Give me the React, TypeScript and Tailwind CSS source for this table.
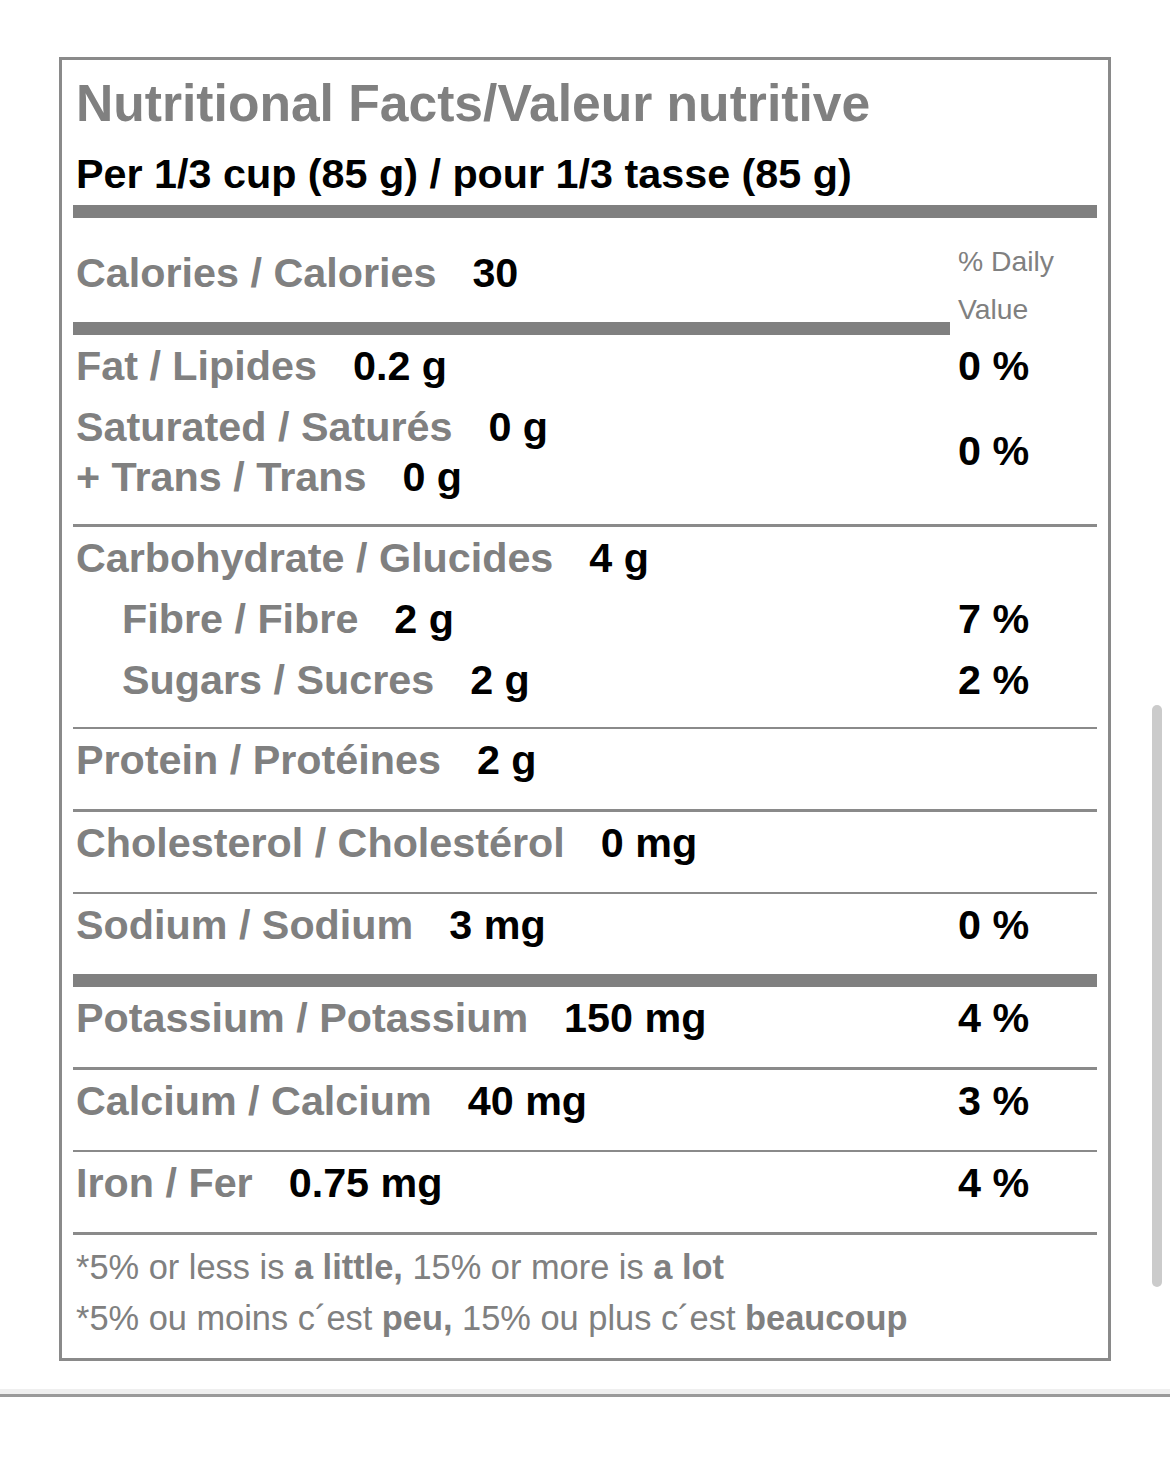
import React from "react"

interface Nutrient {
  label: string
  value: string
  dv?: string
  indent?: boolean
}

const Line = () => <div className="h-[2.5px] bg-[#8a8a8a]" />
const Bar = () => <div className="h-[13px] bg-[#808080]" />

const NutrientRow: React.FC<Nutrient> = ({ label, value, dv, indent }) => (
  <div className="flex h-[50px] items-center leading-[50px]">
    <div className={indent ? "flex-1 pl-[49px]" : "flex-1 pl-[3px]"}>
      <span className="text-[#808080]">{label}</span>
      <span className="ml-[36px] text-black">{value}</span>
    </div>
    <div className="w-[147px] pl-[8px] text-black">{dv}</div>
  </div>
)

const Section: React.FC<{ children: React.ReactNode; multi?: boolean }> = ({
  children,
  multi,
}) => (
  <div
    className={
      multi
        ? "flex flex-col gap-[11px] pt-[6px] pb-[22px]"
        : "flex flex-col pt-[6px] pb-[24px]"
    }
  >
    {children}
  </div>
)

const minerals: Nutrient[] = [
  { label: "Potassium / Potassium", value: "150 mg", dv: "4 %" },
  { label: "Calcium / Calcium", value: "40 mg", dv: "3 %" },
  { label: "Iron / Fer", value: "0.75 mg", dv: "4 %" },
]

export default function App() {
  return (
    <div className="relative min-h-[1474px] bg-white font-['Liberation_Sans',Arial,sans-serif]">
      <div className="pl-[59px] pt-[57px]">
        <div className="w-[1052px] border-[3px] border-[#8a8a8a] px-[11px] font-bold text-[41.3px]">
          <h1 className="pl-[3px] pt-[13px] text-[51.6px] leading-[60px] text-[#808080]">
            Nutritional Facts/Valeur nutritive
          </h1>
          <div className="mt-[16px] pl-[3px] leading-[50px] text-black">
            Per 1/3 cup (85 g) / pour 1/3 tasse (85 g)
          </div>
          <div className="mt-[6px]">
            <Bar />
          </div>

          {/* calories + daily value header */}
          <div className="flex items-start">
            <div className="flex-1 pt-[30px]">
              <div className="pl-[3px] leading-[50px]">
                <span className="text-[#808080]">Calories / Calories</span>
                <span className="ml-[36px] text-black">30</span>
              </div>
              <div className="mt-[24px]">
                <Bar />
              </div>
            </div>
            <div className="w-[147px] pl-[8px] pt-[19px] text-[28.3px] font-normal leading-[48px] text-[#808080]">
              <div>% Daily</div>
              <div>Value</div>
            </div>
          </div>

          <Section multi>
            <NutrientRow label="Fat / Lipides" value="0.2 g" dv="0 %" />
            <div className="flex">
              <div className="flex-1 pl-[3px] leading-[50px]">
                <div>
                  <span className="text-[#808080]">Saturated / Saturés</span>
                  <span className="ml-[36px] text-black">0 g</span>
                </div>
                <div>
                  <span className="text-[#808080]">+ Trans / Trans</span>
                  <span className="ml-[36px] text-black">0 g</span>
                </div>
              </div>
              <div className="flex w-[147px] items-center pl-[8px] text-black">0 %</div>
            </div>
          </Section>
          <Line />

          <Section multi>
            <NutrientRow label="Carbohydrate / Glucides" value="4 g" />
            <NutrientRow label="Fibre / Fibre" value="2 g" dv="7 %" indent />
            <NutrientRow label="Sugars / Sucres" value="2 g" dv="2 %" indent />
          </Section>
          <Line />

          <Section>
            <NutrientRow label="Protein / Protéines" value="2 g" />
          </Section>
          <Line />
          <Section>
            <NutrientRow label="Cholesterol / Cholestérol" value="0 mg" />
          </Section>
          <Line />
          <Section>
            <NutrientRow label="Sodium / Sodium" value="3 mg" dv="0 %" />
          </Section>
          <Bar />

          {minerals.map(m => (
            <React.Fragment key={m.label}>
              <Section>
                <NutrientRow {...m} />
              </Section>
              <Line />
            </React.Fragment>
          ))}

          <div className="pl-[3px] pt-[7px] pb-[14px] text-[34.4px] font-normal leading-[51px] text-[#808080]">
            <div>
              *5% or less is <b className="font-bold">a little,</b> 15% or more is{" "}
              <b className="font-bold">a lot</b>
            </div>
            <div>
              *5% ou moins c´est <b className="font-bold">peu,</b> 15% ou plus c´est{" "}
              <b className="font-bold">beaucoup</b>
            </div>
          </div>
        </div>
      </div>

      <div className="mt-[28px] h-[5px] bg-[#efefef]" />
      <div className="h-[3px] bg-[#9a9a9a]" />

      {/* scroll indicator */}
      <div className="absolute left-[1152px] top-[705px] h-[582px] w-[10px] rounded-full bg-[#cbcbcb]" />
    </div>
  )
}
